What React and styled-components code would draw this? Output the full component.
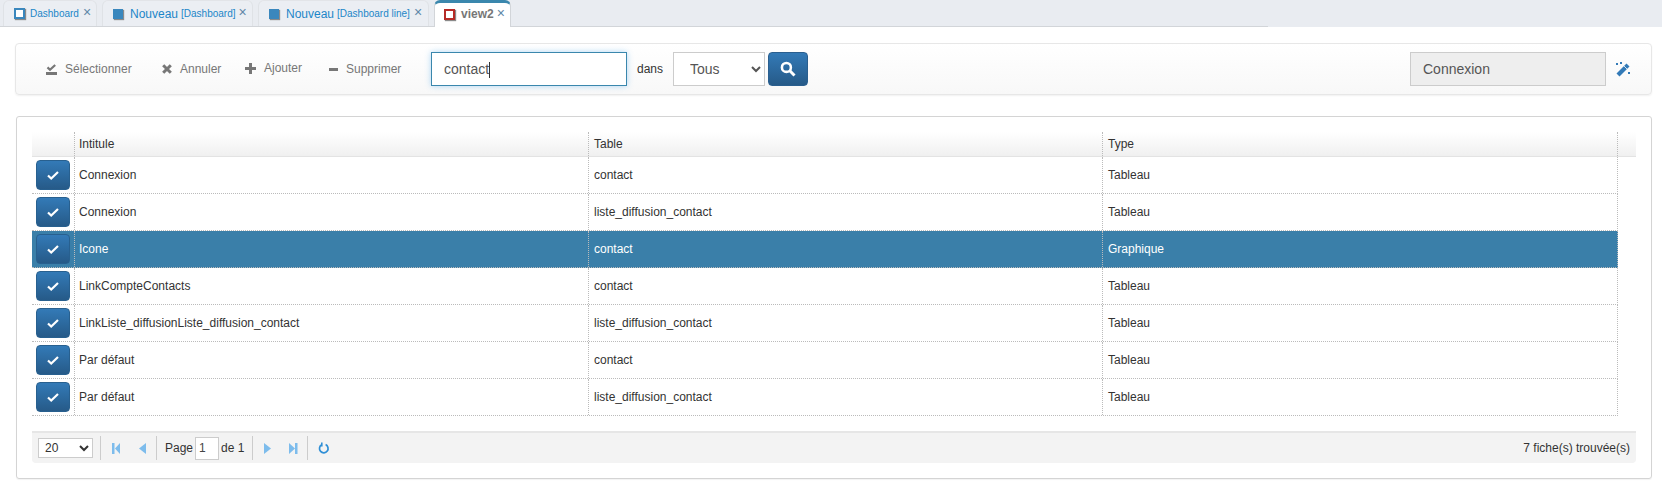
import React from "react";
import styled, { createGlobalStyle } from "styled-components";

const Global = createGlobalStyle`
  html, body { margin: 0; padding: 0; background: #fff; }
  body { font-family: "Liberation Sans", Arial, sans-serif; font-size: 12px; color: #333; width: 1662px; height: 499px; overflow: hidden; }
`;

const TabBar = styled.div`
  height: 27px; background: #e9ecf1;
`;
const TabStrip = styled.div`
  display: flex; align-items: flex-start; height: 27px; width: 1268px; box-sizing: border-box; padding-left: 3px; gap: 5px;
  border-bottom: 1px solid #d2d5d9;
`;
const Tab = styled.div`
  display: flex; align-items: center; height: ${p => p.$active ? 27 : 26}px; padding-left: ${p => p.$pad}px;
  width: ${p => p.$w}px; flex: none; box-sizing: border-box;
  background: ${p => p.$active ? "#fff" : "#ebeef3"};
  border: 1px solid #dfe2e6; border-top-color: #e2e4e8; border-bottom: none; border-radius: 6px 6px 0 0;
  ${p => p.$active ? "border-top: 3px solid #3a87ad; border-color: #3a87ad #d2d5d9 transparent; padding-bottom: 2px;" : ""}
`;
const TabIcon = styled.span`
  width: ${p => p.$hollow ? 7 : 10}px; height: ${p => p.$hollow ? 7 : 10}px; flex: none; margin-right: 6px;
  background: ${p => p.$hollow ? "#fff" : "#3a87bd"};
  border: ${p => p.$hollow ? `2px solid ${p.$color}` : "none"};
  box-shadow: 1px 1px 1px #8a8a8a;
`;
const TabLabel = styled.span`
  font-size: ${p => p.$big ? 12 : 10}px; color: ${p => p.$active ? "#777" : "#1c86c8"}; font-weight: ${p => p.$active ? 700 : 400}; white-space: nowrap;
  margin-left: ${p => p.$nudge ?? 0}px;
`;
const TabHint = styled.span` font-size: 10px; color: #1c86c8; margin-left: 3px; white-space: nowrap; `;
const TabClose = styled.span` font-size: 14px; color: #5f87a8; margin-left: ${p => p.$ml ?? 5}px; line-height: 1; margin-top: -3px; `;

const Toolbar = styled.div`
  display: flex; align-items: center; margin: 16px 10px 0 15px; height: 52px; box-sizing: border-box;
  border: 1px solid #e7e7e7; border-radius: 4px; padding-left: 30px;
  background: linear-gradient(#fff, #f8f8f8); box-shadow: 0 1px 2px rgba(0,0,0,.06);
`;
const Action = styled.div`
  display: flex; align-items: center; color: #777; font-size: 12px; width: ${p => p.$w}px; flex: none;
  position: relative; top: ${p => p.$up ? -1 : 0}px;
  svg { margin-right: 8px; flex: none; }
`;
const Search = styled.div`
  width: 196px; height: 34px; box-sizing: border-box; border: 1px solid #3a87ad; background: #fff; flex: none;
  box-shadow: 0 0 6px rgba(82,168,236,.45); padding-left: 12px; font-size: 14px; color: #555; line-height: 32px;
`;
const Caret = styled.span` display: inline-block; width: 1px; height: 16px; background: #333; vertical-align: -4px; `;
const Dans = styled.span` margin: 0 10px; font-size: 12px; color: #333; `;
const SelectBox = styled.select`
  width: 92px; height: 34px; border: 1px solid #ccc; background: #fff; font: 14px "Liberation Sans", sans-serif; color: #555;
  padding-left: 12px; flex: none; border-radius: 0; outline: none;
`;
const SearchBtn = styled.button`
  width: 40px; height: 34px; margin-left: 3px; border: 1px solid #2a5f8f; border-radius: 4px; padding: 0;
  background: linear-gradient(#337ab7, #265a88); display: flex; align-items: center; justify-content: center; flex: none;
`;
const Spacer = styled.div` flex: 1; `;
const ReadOnly = styled.div`
  width: 196px; height: 34px; box-sizing: border-box; border: 1px solid #ccc; background: #eee; color: #555; font-size: 14px;
  padding-left: 12px; line-height: 32px; flex: none;
`;
const Wand = styled.div` width: 15px; margin: 0 20px 0 10px; display: flex; flex: none; `;

const Panel = styled.div`
  margin: 21px 10px 0 16px; height: 363px; box-sizing: border-box; border: 1px solid #d4d4d4; border-radius: 3px;
  padding: 15px 15px 0 15px; box-shadow: 0 1px 1px rgba(0,0,0,.05);
`;
const HeadRow = styled.div`
  display: grid; grid-template-columns: 42px 514px 514px 515px 1fr; height: 25px; box-sizing: border-box;
  background: linear-gradient(#fff, #f0f0f0); border-bottom: 1px solid #e3e3e3;
`;
const HeadCell = styled.div`
  display: flex; align-items: center; padding-left: ${p => p.$pad ?? 4}px; font-size: 12px; color: #333;
  border-left: ${p => p.$first ? "none" : "1px dotted #bbb"};
`;
const Row = styled.div`
  display: grid; grid-template-columns: 42px 514px 514px 514px; width: 1586px; height: 37px; box-sizing: border-box;
  border-bottom: 1px dotted #bbb; border-right: 1px dotted #bbb;
  background: ${p => p.$sel ? "#3a7fa9" : "#fff"}; color: ${p => p.$sel ? "#fff" : "#333"};
`;
const Cell = styled.div`
  display: flex; align-items: center; padding-left: ${p => p.$pad ?? 4}px; font-size: 12px; border-left: 1px dotted #bbb;
  white-space: nowrap;
`;
const CheckCell = styled.div` display: flex; align-items: flex-start; padding: 3px 0 0 4px; `;
const CheckBtn = styled.button`
  width: 34px; height: 30px; padding: 0; border: 1px solid #28608f; border-radius: 4px;
  background: linear-gradient(#337ab7, #265a88); display: flex; align-items: center; justify-content: center;
`;
const Footer = styled.div`
  display: flex; align-items: center; margin-top: 15px; height: 32px; box-sizing: border-box;
  background: #f3f3f3; border-top: 2px solid #e6e6e6; border-radius: 0 0 4px 4px; padding-left: 6px; font-size: 12px; color: #333;
`;
const PageSize = styled.select`
  width: 55px; height: 20px; border: 1px solid #ccc; background: #fff; font: 12px "Liberation Sans", sans-serif; color: #333; border-radius: 0; padding: 0 0 0 2px; flex: none;
`;
const Sep = styled.span` width: 1px; height: 24px; background: #ccc; margin: 0 ${p => p.$r}px 0 ${p => p.$l}px; flex: none; `;
const Pager = styled.span` display: flex; margin-right: ${p => p.$mr ?? 0}px; flex: none; `;
const PageInput = styled.span`
  width: 24px; height: 23px; box-sizing: border-box; border: 1px solid #ccc; background: #fff; margin: 0 2px; padding-left: 3px; line-height: 21px; font-size: 12px; color: #444;
`;
const Count = styled.span` margin-left: auto; margin-right: 6px; `;

const Tick = () => (
  <svg width="12" height="9" viewBox="0 0 12 9"><path d="M1 4.5l3.2 3L11 1" fill="none" stroke="#fff" strokeWidth="2.2" /></svg>
);
const SelectIcon = () => (
  <svg width="11" height="11" viewBox="0 0 11 11"><path d="M1.5 3.4L4 5.8 9.2 1" fill="none" stroke="#777" strokeWidth="2.2" /><rect y="8" width="11" height="3" fill="#777" /></svg>
);
const CrossIcon = () => (
  <svg width="10" height="10" viewBox="0 0 10 10"><path d="M1.2 1.2l7.6 7.6M8.8 1.2L1.2 8.8" stroke="#777" strokeWidth="3" /></svg>
);
const PlusIcon = () => (
  <svg width="11" height="11" viewBox="0 0 11 11" fill="#777"><path d="M4 0h3v4h4v3H7v4H4V7H0V4h4z" /></svg>
);
const MinusIcon = () => (
  <svg width="9" height="11" viewBox="0 0 9 11" fill="#777"><rect y="4" width="9" height="3" /></svg>
);
const Magnifier = () => (
  <svg width="16" height="16" viewBox="0 0 15 15"><circle cx="6" cy="6" r="4.2" fill="none" stroke="#fff" strokeWidth="2.4" /><path d="M9.2 9.2l4.4 4.4" stroke="#fff" strokeWidth="2.8" /></svg>
);
const WandIcon = () => (
  <svg width="15" height="15" viewBox="0 0 15 15" fill="#337ab7"><path d="M.5 11.5l10-10 3 3-10 10z" /><path d="M8 4l3 3" stroke="#fff" strokeWidth="0.8" /><rect x="0" y="1" width="2" height="2" /><rect x="4" y="0" width="2" height="2" /><rect x="12" y="10" width="2" height="2" /></svg>
);
const PagerIcon = ({ d }) => (
  <svg width="11" height="11" viewBox="0 0 11 11" fill="#7dbcec"><path d={d} /></svg>
);
const Refresh = () => (
  <svg width="12" height="12" viewBox="0 0 12 12"><path d="M7.6 2.6A4.3 4.3 0 1 1 3.6 2.8" fill="none" stroke="#2f8fd6" strokeWidth="1.7" /><path d="M3 0.4v4.2h1.6V0.4z" fill="#2f8fd6" /></svg>
);

const rows = [
  ["Connexion", "contact", "Tableau"],
  ["Connexion", "liste_diffusion_contact", "Tableau"],
  ["Icone", "contact", "Graphique", true],
  ["LinkCompteContacts", "contact", "Tableau"],
  ["LinkListe_diffusionListe_diffusion_contact", "liste_diffusion_contact", "Tableau"],
  ["Par défaut", "contact", "Tableau"],
  ["Par défaut", "liste_diffusion_contact", "Tableau"],
];

export default function App() {
  return (
    <>
      <Global />
      <TabBar>
        <TabStrip>
          <Tab $w={94} $pad={10}><TabIcon $hollow $color="#3a87bd" /><TabLabel $nudge={-1}>Dashboard</TabLabel><TabClose $ml={4}>×</TabClose></Tab>
          <Tab $w={151} $pad={10}><TabIcon /><TabLabel $big $nudge={1}>Nouveau</TabLabel><TabHint>[Dashboard]</TabHint><TabClose $ml={3}>×</TabClose></Tab>
          <Tab $w={171} $pad={10}><TabIcon /><TabLabel $big $nudge={1}>Nouveau</TabLabel><TabHint>[Dashboard line]</TabHint><TabClose $ml={4}>×</TabClose></Tab>
          <Tab $active $w={77} $pad={9}><TabIcon $hollow $color="#b52b27" /><TabLabel $big $active>view2</TabLabel><TabClose $ml={3}>×</TabClose></Tab>
        </TabStrip>
      </TabBar>
      <Toolbar>
        <Action $w={116}><SelectIcon />Sélectionner</Action>
        <Action $w={83}><CrossIcon />Annuler</Action>
        <Action $w={84} $up><PlusIcon />Ajouter</Action>
        <Action $w={102}><MinusIcon />Supprimer</Action>
        <Search>contact<Caret /></Search>
        <Dans>dans</Dans>
        <SelectBox defaultValue="Tous"><option>Tous</option></SelectBox>
        <SearchBtn><Magnifier /></SearchBtn>
        <Spacer />
        <ReadOnly>Connexion</ReadOnly>
        <Wand><WandIcon /></Wand>
      </Toolbar>
      <Panel>
        <HeadRow>
          <HeadCell $first />
          <HeadCell>Intitule</HeadCell>
          <HeadCell $pad={5}>Table</HeadCell>
          <HeadCell $pad={5}>Type</HeadCell>
          <HeadCell />
        </HeadRow>
        {rows.map(([a, b, c, sel], i) => (
          <Row key={i} $sel={sel}>
            <CheckCell><CheckBtn><Tick /></CheckBtn></CheckCell>
            <Cell>{a}</Cell>
            <Cell $pad={5}>{b}</Cell>
            <Cell $pad={5}>{c}</Cell>
          </Row>
        ))}
        <Footer>
          <PageSize defaultValue="20"><option>20</option></PageSize>
          <Sep $l={7} $r={10} />
          <Pager $mr={14}><PagerIcon d="M1 0h2.5v11H1zM9 0v11L4 5.5z" /></Pager>
          <Pager><PagerIcon d="M3 5.5L10 0v11z" /></Pager>
          <Sep $l={9} $r={8} />
          Page<PageInput>1</PageInput>de 1
          <Sep $l={8} $r={9} />
          <Pager $mr={15}><PagerIcon d="M2 0v11l7-5.5z" /></Pager>
          <Pager><PagerIcon d="M1 0v11l6-5.5zM7 0h2.5v11H7z" /></Pager>
          <Sep $l={8} $r={10} />
          <Pager><Refresh /></Pager>
          <Count>7 fiche(s) trouvée(s)</Count>
        </Footer>
      </Panel>
    </>
  );
}
